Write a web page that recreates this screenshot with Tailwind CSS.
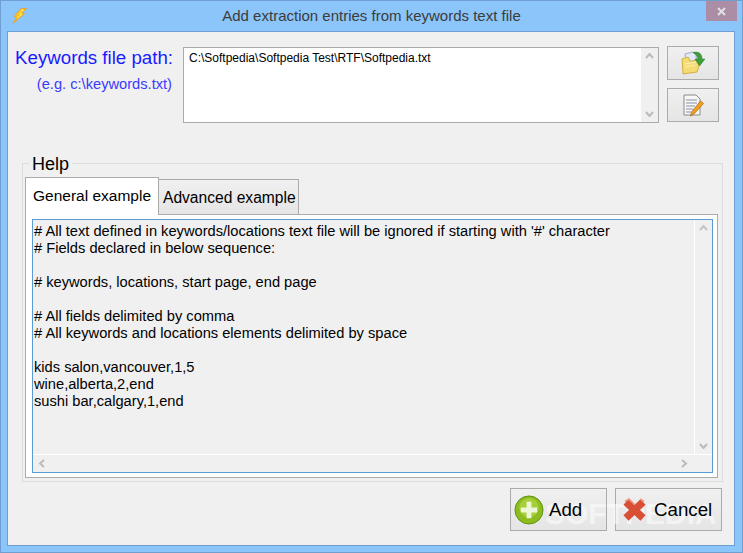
<!DOCTYPE html>
<html lang="en">
<head>
<meta charset="UTF-8">
<title>Add extraction entries from keywords text file</title>
<script src="https://cdn.jsdelivr.net/npm/@tailwindcss/browser@4"></script>
</head>
<body class="w-[743px] h-[553px] overflow-hidden bg-[#8bc5fa] font-['Liberation_Sans',Arial,sans-serif] text-black">
<div class="w-[743px] h-[553px] border border-[#6f9fd0] flex flex-col relative">
    <!-- title bar -->
    <div class="h-[30px] flex items-center shrink-0 relative">
        <svg class="ml-[11px] mt-[-1px] w-[15px] h-[16px]" viewBox="0 0 15 16">
            <path d="M9 0.500 L14.500 0.500 L10 4.500 L12.500 5.500 L1 15.500 L4.500 9.500 L2 8.500 Z" fill="#f7c51e" stroke="#ee9a2a" stroke-width="0.800"/>
            <path d="M9 2 L11.500 2 L7.500 6 L10 6.500 L5 10" fill="none" stroke="#ffeb6a" stroke-width="1"/>
        </svg>
        <div class="absolute left-0 right-0 top-[6px] text-center text-[15px] leading-[18px] text-[#3c3c3c]">Add extraction entries from keywords text file</div>
        <div class="absolute right-[5px] top-0 w-[31px] h-[20px] bg-[#ab8da6] flex items-center justify-center">
            <svg class="w-[9px] h-[9px]" viewBox="0 0 9 9"><path d="M1 1 L8 8 M8 1 L1 8" stroke="#e4dfe6" stroke-width="2"/></svg>
        </div>
    </div>
    <!-- client -->
    <div class="ml-[6px] mr-[7px] h-[515px] bg-[#f0f0f0] border border-[#6f9fd0] flex flex-col relative">
        <div class="flex pt-[15px] h-[131px] shrink-0">
            <div class="w-[175px] shrink-0 flex flex-col items-end pr-[10px]">
                <div class="text-[18.7px] leading-[22px] text-[#1a1aff] whitespace-nowrap">Keywords file path:</div>
                <div class="text-[14.67px] leading-[18px] mt-[6px] text-[#3a3aff] whitespace-nowrap mr-[1px]">(e.g. c:\keywords.txt)</div>
            </div>
            <div class="w-[476px] h-[76px] border border-[#ababab] bg-white flex shrink-0">
                <div class="flex-1 px-[5px] pt-[3px] text-[12px] leading-[15px]">C:\Softpedia\Softpedia Test\RTF\Softpedia.txt</div>
                <div class="w-[17px] bg-[#f0f0f0] flex flex-col justify-between items-center py-[4px]">
                    <svg class="w-[9px] h-[7px]" viewBox="0 0 9 7"><path d="M1 6 L4.5 2 L8 6" fill="none" stroke="#bbb" stroke-width="2"/></svg>
                    <svg class="w-[9px] h-[7px]" viewBox="0 0 9 7"><path d="M1 1 L4.5 5 L8 1" fill="none" stroke="#bbb" stroke-width="2"/></svg>
                </div>
            </div>
            <div class="ml-[8px] mt-[-1px] flex flex-col gap-[8px]">
                <button class="w-[52px] h-[34px] border border-[#ababab] bg-gradient-to-b from-[#f0f0f0] to-[#e5e5e5] flex items-center justify-center">
                    <svg class="w-[24px] h-[24px]" viewBox="0 0 24 24">
                        <path d="M4 3 L12 1 L15 4 L16 15 L6 17 Z" fill="#dfe9f7" stroke="#8fa0b8" stroke-width="0.800"/>
                        <path d="M1 8 L7 6 L9 10 L20 9 L16 21 L2 23 Z" fill="#f4dc72" stroke="#c9a227" stroke-width="0.800"/>
                        <path d="M4 13 L15 11 M4 16 L14 14" stroke="#fbf0b8" stroke-width="1"/>
                        <path d="M12 1.500 C18 0 21 3 21 8 L24 8 L18.500 15 L14 8 L16.800 8 C17 5.500 15 3.500 12 1.500 Z" fill="#3f9d3a" stroke="#2c7a2c" stroke-width="0.500"/>
                    </svg>
                </button>
                <button class="w-[52px] h-[34px] border border-[#ababab] bg-gradient-to-b from-[#f0f0f0] to-[#e5e5e5] flex items-center justify-center">
                    <svg class="w-[21px] h-[23px]" viewBox="0 0 21 23">
                        <path d="M1 1 L13 1 L17 5 L17 21 L1 21 Z" fill="#f6f6f2" stroke="#8a8a8a"/>
                        <path d="M3 6 H14 M3 9 H14 M3 12 H12 M3 15 H10 M3 18 H8" stroke="#8a8fb0"/>
                        <path d="M17.500 7 L20.500 9.500 L11 20 L7.500 22 L8.500 18 Z" fill="#f0a020" stroke="#a86410" stroke-width="0.700"/>
                    </svg>
                </button>
            </div>
        </div>
        <!-- help group -->
        <div class="relative ml-[14px] w-[701px] h-[319px] border border-[#dcdcdc] shrink-0 px-[2px] pt-[13px]">
            <div class="absolute left-[6px] top-[-10px] px-[3px] bg-[#f0f0f0] text-[18px] leading-[21px]">Help</div>
            <div class="flex items-end h-[38px] relative z-10">
                <div class="w-[134px] h-[38px] bg-white border border-b-0 border-[#ababab] text-[15.5px] leading-[35px] pl-[7px] whitespace-nowrap">General example</div>
                <div class="w-[141px] h-[36px] ml-[-1px] bg-gradient-to-b from-[#f0f0f0] to-[#e5e5e5] border border-[#ababab] text-[15.6px] leading-[35px] pl-[4px] whitespace-nowrap">Advanced example</div>
            </div>
            <div class="w-[693px] h-[264px] mt-[-1px] border border-[#ababab] bg-white pt-[4px] pl-[6px] pr-[4px] pb-[4px]">
                <div class="h-[254px] border border-[#5b9bd5] bg-[#f0f0f0] flex flex-col">
                    <div class="flex flex-1 min-h-0 border-b border-white">
                        <div class="flex-1 px-[1px] pt-[3px] text-[14.67px] leading-[17px] whitespace-pre"># All text defined in keywords/locations text file will be ignored if starting with '#' character
# Fields declared in below sequence:

# keywords, locations, start page, end page

# All fields delimited by comma
# All keywords and locations elements delimited by space

kids salon,vancouver,1,5
wine,alberta,2,end
sushi bar,calgary,1,end</div>
                        <div class="w-[18px] border-l border-white flex flex-col justify-between items-center py-[4px]">
                            <svg class="w-[9px] h-[7px]" viewBox="0 0 9 7"><path d="M1 6 L4.5 2 L8 6" fill="none" stroke="#c4c4c4" stroke-width="2"/></svg>
                            <svg class="w-[9px] h-[7px]" viewBox="0 0 9 7"><path d="M1 1 L4.5 5 L8 1" fill="none" stroke="#bbb" stroke-width="2"/></svg>
                        </div>
                    </div>
                    <div class="h-[17px] shrink-0 flex justify-between items-center pl-[5px] pr-[24px]">
                        <svg class="w-[7px] h-[9px]" viewBox="0 0 7 9"><path d="M6 1 L2 4.500 L6 8" fill="none" stroke="#bbb" stroke-width="2"/></svg>
                        <svg class="w-[7px] h-[9px]" viewBox="0 0 7 9"><path d="M1 1 L5 4.500 L1 8" fill="none" stroke="#bbb" stroke-width="2"/></svg>
                    </div>
                </div>
            </div>
        </div>
        <!-- bottom buttons -->
        <div class="flex justify-end gap-[8px] pr-[12px] pt-[6px]">
            <button class="w-[97px] h-[43px] border border-[#ababab] bg-gradient-to-b from-[#f0f0f0] to-[#e5e5e5] flex items-center pl-[3px] text-[18.7px]">
                <svg class="relative z-10 w-[30px] h-[30px]" viewBox="0 0 31 31">
                    <circle cx="15.500" cy="15.500" r="14.500" fill="#8cbc1e" stroke="#5f8f14"/>
                    <circle cx="15.500" cy="13" r="10" fill="#a6cf3c"/>
                    <path d="M15.500 7 V24 M7 15.500 H24" stroke="#eef6d8" stroke-width="5"/>
                </svg>
                <span class="relative z-10 ml-[5px] mt-[1px]">Add</span>
            </button>
            <button class="w-[107px] h-[43px] border border-[#ababab] bg-gradient-to-b from-[#f0f0f0] to-[#e5e5e5] flex items-center pl-[6px] text-[18.7px]">
                <svg class="relative z-10 w-[25px] h-[24px]" viewBox="0 0 25 24">
                    <path d="M4 4 L21 20 M21 4 L4 20" stroke="#d94f35" stroke-width="7.500" stroke-linecap="butt"/>
                    <path d="M3 3.500 L7 1 L12.500 6.500 M18 1 L22 3.500" fill="none" stroke="#f0927c" stroke-width="1.500"/>
                </svg>
                <span class="relative z-10 ml-[7px] mt-[1px]">Cancel</span>
            </button>
        </div>
        <div class="absolute z-0 left-[537px] top-[464px] text-[30px] leading-[36px] font-bold text-white/50 pointer-events-none whitespace-nowrap">SOFTPEDIA</div>
    </div>
</div>
</body>
</html>
